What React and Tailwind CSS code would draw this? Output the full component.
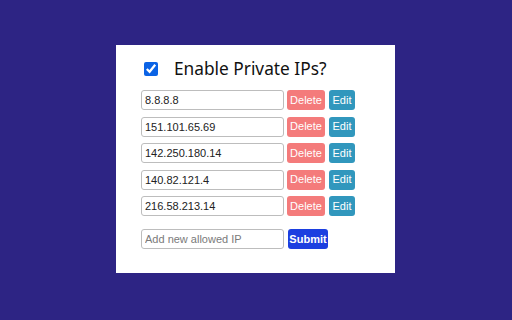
import React from "react";

const ips = ["8.8.8.8", "151.101.65.69", "142.250.180.14", "140.82.121.4", "216.58.213.14"];

export default function App() {
  return (
    <div className="w-[512px] h-[320px] bg-[#2d2484] pt-[45px] pl-[116px] overflow-hidden">
      <div className="w-[279px] h-[228px] bg-white pl-[25px] pt-[11px]">
        <div className="flex items-center h-[24px] mt-[1px]">
          <input
            type="checkbox"
            defaultChecked
            className="w-[14px] h-[14px] ml-[3px] accent-[#0b63e5] m-0"
          />
          <span
            className="ml-[16px] text-[17.3px] leading-none text-[#111]"
            style={{ fontFamily: '"Noto Sans", "Open Sans", sans-serif' }}
          >
            Enable Private IPs?
          </span>
        </div>
        <div className="flex flex-col gap-[6.5px] mt-[9px]" style={{ fontFamily: '"Liberation Sans", Arial, sans-serif' }}>
          {ips.map((ip) => (
            <div key={ip} className="flex items-center h-[20px]">
              <input
                type="text"
                defaultValue={ip}
                className="w-[143px] h-[20px] border border-[#bdbdbd] rounded-[3px] px-[3px] text-[11px] text-[#222] outline-none"
              />
              <button className="ml-[3px] w-[38px] h-[20px] rounded-[3px] bg-[#f47b7b] text-white text-[11px] leading-none">
                Delete
              </button>
              <button className="ml-[4px] w-[26px] h-[20px] rounded-[3px] bg-[#3197bd] text-white text-[11px] leading-none">
                Edit
              </button>
            </div>
          ))}
          <div className="flex items-center h-[20px] mt-[6.5px]">
            <input
              type="text"
              placeholder="Add new allowed IP"
              className="w-[143px] h-[20px] border border-[#bdbdbd] rounded-[3px] px-[3px] text-[11px] text-[#222] placeholder:text-[#7a7a7a] outline-none"
            />
            <button className="ml-[4px] w-[40px] h-[20px] rounded-[3px] bg-[#1c3fe0] text-white text-[11px] font-bold leading-none">
              Submit
            </button>
          </div>
        </div>
      </div>
    </div>
  );
}
